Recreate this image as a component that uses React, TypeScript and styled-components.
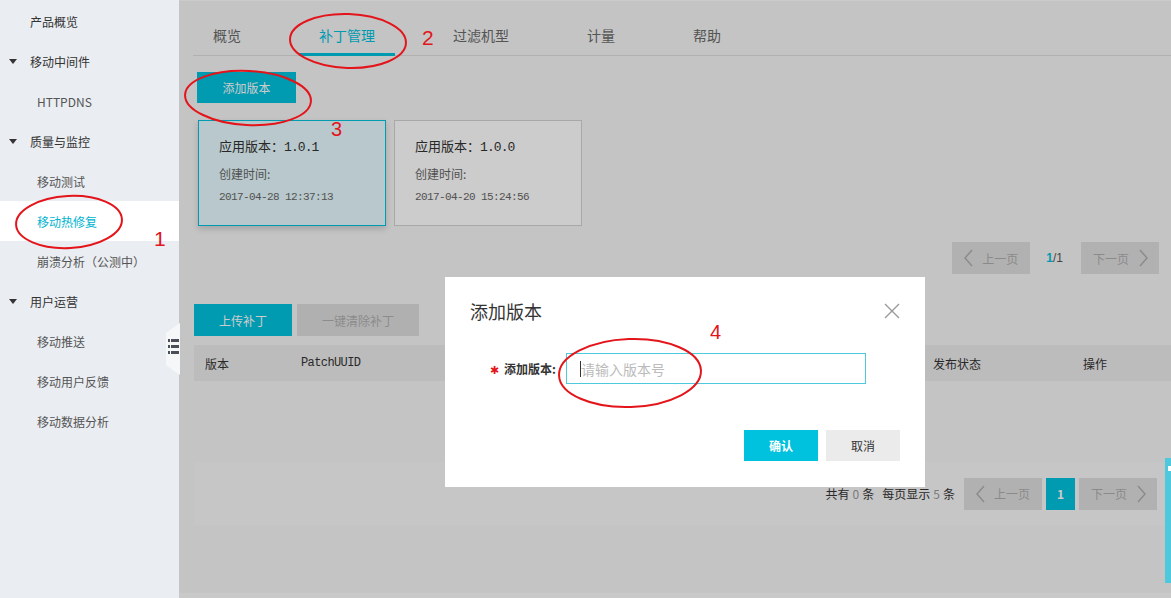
import React, { FC } from 'react'
import styled, { createGlobalStyle } from 'styled-components'

const TEAL = '#00c1de'
const RED = '#e3151b'

const GlobalStyle = createGlobalStyle`
  html, body { margin: 0; padding: 0; overflow: hidden; }
  body {
    font-family: "Noto Sans CJK SC", "Liberation Sans", sans-serif;
    color: #333;
    background: #f5f5f5;
  }
  * { box-sizing: border-box; }
`

const Page = styled.div`
  position: relative;
  display: flex;
  width: 1171px;
  height: 598px;
  overflow: hidden;
`

/* ---------- sidebar ---------- */
const Sidebar = styled.nav`
  width: 179px;
  flex-shrink: 0;
  background: #eaedf1;
  padding-top: 1px;
`

const NavItem = styled.div<{ $level: number; $active?: boolean; $caret?: boolean }>`
  display: flex;
  align-items: center;
  gap: 13px;
  height: 40px;
  padding-left: ${p => (p.$caret ? 9 : p.$level === 0 ? 30 : 37)}px;
  font-size: 12px;
  color: ${p => (p.$active ? '#00b4d0' : p.$level === 0 ? '#333' : '#555')};
  background: ${p => (p.$active ? '#fff' : 'transparent')};
`

const Caret = styled.span`
  width: 0;
  height: 0;
  border-left: 4px solid transparent;
  border-right: 4px solid transparent;
  border-top: 5px solid #333;
`

const CollapseHandle = styled.div`
  position: absolute;
  left: 165px;
  top: 323px;
  width: 15px;
  height: 52px;
`

/* ---------- main ---------- */
const MainColumn = styled.main`
  position: relative;
  flex: 1;
  display: flex;
  flex-direction: column;
  background: #fcfcfc;
`

const Panel = styled.div`
  height: 593px;
  background: #f5f5f5;
  border-top: 1px solid #fdfdfd;
  padding: 17px 0 0 14px;
`

const TabBar = styled.div`
  display: flex;
  gap: 38px;
  border-bottom: 1px solid #dedede;
`

const Tab = styled.div<{ $active?: boolean }>`
  height: 38px;
  margin-bottom: -1px;
  padding: 0 20px;
  line-height: 35px;
  font-size: 14px;
  color: ${p => (p.$active ? TEAL : '#6a6a6a')};
  border-bottom: 3px solid ${p => (p.$active ? TEAL : 'transparent')};
`

const Toolbar = styled.div`
  display: flex;
  gap: 5px;
  margin-top: 16px;
  padding-left: 4px;
`

const Button = styled.button<{ $variant: 'primary' | 'muted' | 'plain'; $width: number; $height?: number; $bold?: boolean }>`
  width: ${p => p.$width}px;
  height: ${p => p.$height ?? 32}px;
  border: none;
  padding: 0;
  font-family: inherit;
  font-size: 12px;
  font-weight: ${p => (p.$bold ? 700 : 400)};
  background: ${p => (p.$variant === 'primary' ? TEAL : p.$variant === 'muted' ? '#dddddd' : '#ebebeb')};
  color: ${p => (p.$variant === 'primary' ? '#fff' : p.$variant === 'muted' ? '#afafaf' : '#333')};
`

const CardRow = styled.div`
  display: flex;
  gap: 8px;
  margin-top: 17px;
  padding-left: 5px;
`

const Card = styled.div<{ $active?: boolean }>`
  width: 188px;
  height: 106px;
  padding: 15px 20px 0 20px;
  border: 1px solid ${p => (p.$active ? TEAL : '#d2d2d2')};
  background: ${p => (p.$active ? '#e7fbff' : '#fff')};
  box-shadow: ${p => (p.$active ? '0 3px 6px rgba(0, 0, 0, 0.16)' : 'none')};
`

const CardTitle = styled.div`
  font-size: 13px;
  line-height: 20px;
  color: #333;
`

const Mono = styled.span<{ $size: number; $track?: number }>`
  font-family: "Liberation Mono", "Noto Sans CJK SC", monospace;
  font-size: ${p => p.$size}px;
  letter-spacing: ${p => p.$track ?? 0}px;
`

const CardLabel = styled.div`
  margin-top: 7px;
  font-size: 12px;
  line-height: 18px;
  color: #666;
`

const CardDate = styled.div`
  margin-top: 1px;
  line-height: 18px;
  color: #666;
`

const PagerRow = styled.div<{ $gap: number }>`
  display: flex;
  justify-content: flex-end;
  align-items: center;
  gap: ${p => p.$gap}px;
`

const TopPager = styled(PagerRow)`
  margin-top: 16px;
  padding-right: 12px;
`

const PageButton = styled.div<{ $next?: boolean }>`
  display: flex;
  align-items: center;
  gap: ${p => (p.$next ? 10 : 9)}px;
  width: 78px;
  height: 32px;
  padding-left: 12px;
  background: #dedede;
  color: #adadad;
  font-size: 12px;
`

const PageCount = styled.span`
  margin-right: 2px;
  font-family: "Liberation Sans", sans-serif;
  font-size: 12px;
  color: #555;
  b {
    color: ${TEAL};
  }
`

const CurrentPage = styled.div`
  display: flex;
  align-items: center;
  justify-content: center;
  width: 29px;
  height: 32px;
  background: ${TEAL};
  color: #fff;
  font-size: 12px;
  font-weight: 700;
`

const PatchSection = styled.section`
  margin-top: 30px;
  padding-left: 1px;
`

const ButtonRow = styled.div`
  display: flex;
  gap: 5px;
`

const TableHead = styled.div`
  display: grid;
  grid-template-columns: 96px 632px 150px 1fr;
  align-items: center;
  height: 36px;
  margin-top: 9px;
  padding-left: 11px;
  background: #ececec;
  font-size: 12px;
  color: #333;
`

const TableBody = styled.div`
  height: 81px;
`

const TableFooter = styled.div`
  display: flex;
  justify-content: flex-end;
  align-items: center;
  height: 63px;
  padding-right: 14px;
  background: #f8f8f8;
`

const Summary = styled.span`
  margin-right: 9px;
  font-size: 12px;
  color: #333;
  i {
    font-style: normal;
    color: #9a9a9a;
    margin: 0 3px;
  }
  em {
    font-style: normal;
    margin-left: 8px;
  }
`

const Overlay = styled.div`
  position: absolute;
  inset: 0;
  background: rgba(0, 0, 0, 0.2);
`

/* ---------- modal ---------- */
const Modal = styled.div`
  position: absolute;
  left: 445px;
  top: 277px;
  width: 480px;
  height: 210px;
  padding: 22px 25px 26px 25px;
  background: #fff;
  display: flex;
  flex-direction: column;
`

const ModalHeader = styled.div`
  display: flex;
  justify-content: space-between;
  align-items: center;
  height: 24px;
`

const ModalTitle = styled.h2`
  margin: 0;
  font-size: 18px;
  font-weight: 400;
  line-height: 24px;
  color: #333;
`

const FormRow = styled.div`
  display: flex;
  align-items: center;
  margin-top: 30px;
`

const FieldLabel = styled.label`
  display: flex;
  justify-content: flex-end;
  align-items: center;
  gap: 5px;
  width: 86px;
  margin-right: 10px;
  font-size: 12px;
  font-weight: 700;
  color: #333;
  span {
    color: ${RED};
    font-size: 11px;
    font-weight: 400;
  }
`

const InputBox = styled.div`
  display: flex;
  align-items: center;
  width: 300px;
  height: 31px;
  padding-left: 13px;
  border: 1px solid #4fc9dc;
  font-size: 14px;
  color: #bbb;
`

const TextCaret = styled.span`
  width: 1px;
  height: 16px;
  background: #333;
`

const ModalFooter = styled.div`
  display: flex;
  justify-content: flex-end;
  gap: 8px;
  margin-top: 46px;
`

const FeedbackTab = styled.div`
  position: absolute;
  right: 0;
  top: 458px;
  width: 6px;
  height: 125px;
  background: #4ec8dc;
  &::after {
    content: '';
    position: absolute;
    right: 0;
    top: 8px;
    width: 3px;
    height: 5px;
    background: #fff;
  }
`

const Annotations = styled.svg`
  position: absolute;
  left: 0;
  top: 0;
  pointer-events: none;
  text {
    font-family: "Liberation Sans", sans-serif;
    fill: ${RED};
  }
  ellipse {
    fill: none;
    stroke: ${RED};
    stroke-width: 2;
  }
`

const Chevron: FC<{ dir: 'left' | 'right' }> = ({ dir }) => (
  <svg width="9" height="18" viewBox="0 0 9 18">
    <path d={dir === 'left' ? 'M8 1 L1 9 L8 17' : 'M1 1 L8 9 L1 17'} stroke="#adadad" strokeWidth="1.4" fill="none" />
  </svg>
)

const Pager: FC<{ middle: React.ReactNode }> = ({ middle }) => (
  <>
    <PageButton>
      <Chevron dir="left" />
      上一页
    </PageButton>
    {middle}
    <PageButton $next>
      下一页
      <Chevron dir="right" />
    </PageButton>
  </>
)

const nav: { label: string; level: number; caret?: boolean; active?: boolean }[] = [
  { label: '产品概览', level: 0 },
  { label: '移动中间件', level: 0, caret: true },
  { label: 'HTTPDNS', level: 1 },
  { label: '质量与监控', level: 0, caret: true },
  { label: '移动测试', level: 1 },
  { label: '移动热修复', level: 1, active: true },
  { label: '崩溃分析（公测中）', level: 1 },
  { label: '用户运营', level: 0, caret: true },
  { label: '移动推送', level: 1 },
  { label: '移动用户反馈', level: 1 },
  { label: '移动数据分析', level: 1 },
]

const tabs = ['概览', '补丁管理', '过滤机型', '计量', '帮助']

const versions = [
  { version: '1.0.1', created: '2017-04-28 12:37:13', active: true },
  { version: '1.0.0', created: '2017-04-20 15:24:56' },
]

const App: FC = () => (
  <Page>
    <GlobalStyle />
    <Sidebar>
      {nav.map(item => (
        <NavItem key={item.label} $level={item.level} $caret={item.caret} $active={item.active}>
          {item.caret && <Caret />}
          {item.label}
        </NavItem>
      ))}
    </Sidebar>

    <MainColumn>
      <Panel>
        <TabBar>
          {tabs.map(t => (
            <Tab key={t} $active={t === '补丁管理'}>{t}</Tab>
          ))}
        </TabBar>

        <Toolbar>
          <Button $variant="primary" $width={99} $height={31}>添加版本</Button>
        </Toolbar>

        <CardRow>
          {versions.map(v => (
            <Card key={v.version} $active={v.active}>
              <CardTitle>
                应用版本：<Mono $size={13} $track={-0.9}>{v.version}</Mono>
              </CardTitle>
              <CardLabel>创建时间:</CardLabel>
              <CardDate>
                <Mono $size={11} $track={-0.6}>{v.created}</Mono>
              </CardDate>
            </Card>
          ))}
        </CardRow>

        <TopPager $gap={16}>
          <Pager middle={<PageCount><b>1</b>/1</PageCount>} />
        </TopPager>

        <PatchSection>
          <ButtonRow>
            <Button $variant="primary" $width={98}>上传补丁</Button>
            <Button $variant="muted" $width={122}>一键清除补丁</Button>
          </ButtonRow>
          <TableHead>
            <span>版本</span>
            <Mono $size={12} $track={-0.6}>PatchUUID</Mono>
            <span>发布状态</span>
            <span>操作</span>
          </TableHead>
          <TableBody />
          <TableFooter>
            <Summary>
              共有<i>0</i>条<em>每页显示</em><i>5</i>条
            </Summary>
            <PagerRow $gap={4}>
              <Pager middle={<CurrentPage>1</CurrentPage>} />
            </PagerRow>
          </TableFooter>
        </PatchSection>
      </Panel>
      <Overlay />
    </MainColumn>

    <CollapseHandle>
      <svg width="15" height="52" viewBox="0 0 15 52">
        <polygon points="15,0 1,10 1,42 15,52" fill="#f6f7f9" />
        <rect x="3" y="16" width="2" height="3" fill="#4a4f57" />
        <rect x="6" y="16" width="8" height="3" fill="#4a4f57" />
        <rect x="3" y="22" width="2" height="3" fill="#4a4f57" />
        <rect x="6" y="22" width="8" height="3" fill="#4a4f57" />
        <rect x="3" y="28" width="2" height="3" fill="#4a4f57" />
        <rect x="6" y="28" width="8" height="3" fill="#4a4f57" />
      </svg>
    </CollapseHandle>

    <Modal>
      <ModalHeader>
        <ModalTitle>添加版本</ModalTitle>
        <svg width="16" height="16" viewBox="0 0 16 16">
          <path d="M1 1 L15 15 M15 1 L1 15" stroke="#9a9a9a" strokeWidth="1.4" />
        </svg>
      </ModalHeader>
      <FormRow>
        <FieldLabel>
          <span>✱</span>添加版本:
        </FieldLabel>
        <InputBox>
          <TextCaret />
          请输入版本号
        </InputBox>
      </FormRow>
      <ModalFooter>
        <Button $variant="primary" $width={74} $height={31} $bold>确认</Button>
        <Button $variant="plain" $width={74} $height={31}>取消</Button>
      </ModalFooter>
    </Modal>

    <FeedbackTab />

    <Annotations width="1171" height="598" viewBox="0 0 1171 598">
      <ellipse cx="69" cy="222" rx="53" ry="26" transform="rotate(-3 69 222)" />
      <text x="154" y="246" fontSize="21">1</text>
      <ellipse cx="348" cy="41" rx="58" ry="27" transform="rotate(2 348 41)" />
      <text x="422" y="45" fontSize="21">2</text>
      <ellipse cx="248" cy="98" rx="63" ry="27" transform="rotate(3 248 98)" />
      <text x="331" y="136" fontSize="20">3</text>
      <ellipse cx="630" cy="373" rx="71" ry="34" transform="rotate(-2 630 373)" />
      <text x="710" y="339" fontSize="20">4</text>
    </Annotations>
  </Page>
)

export default App
